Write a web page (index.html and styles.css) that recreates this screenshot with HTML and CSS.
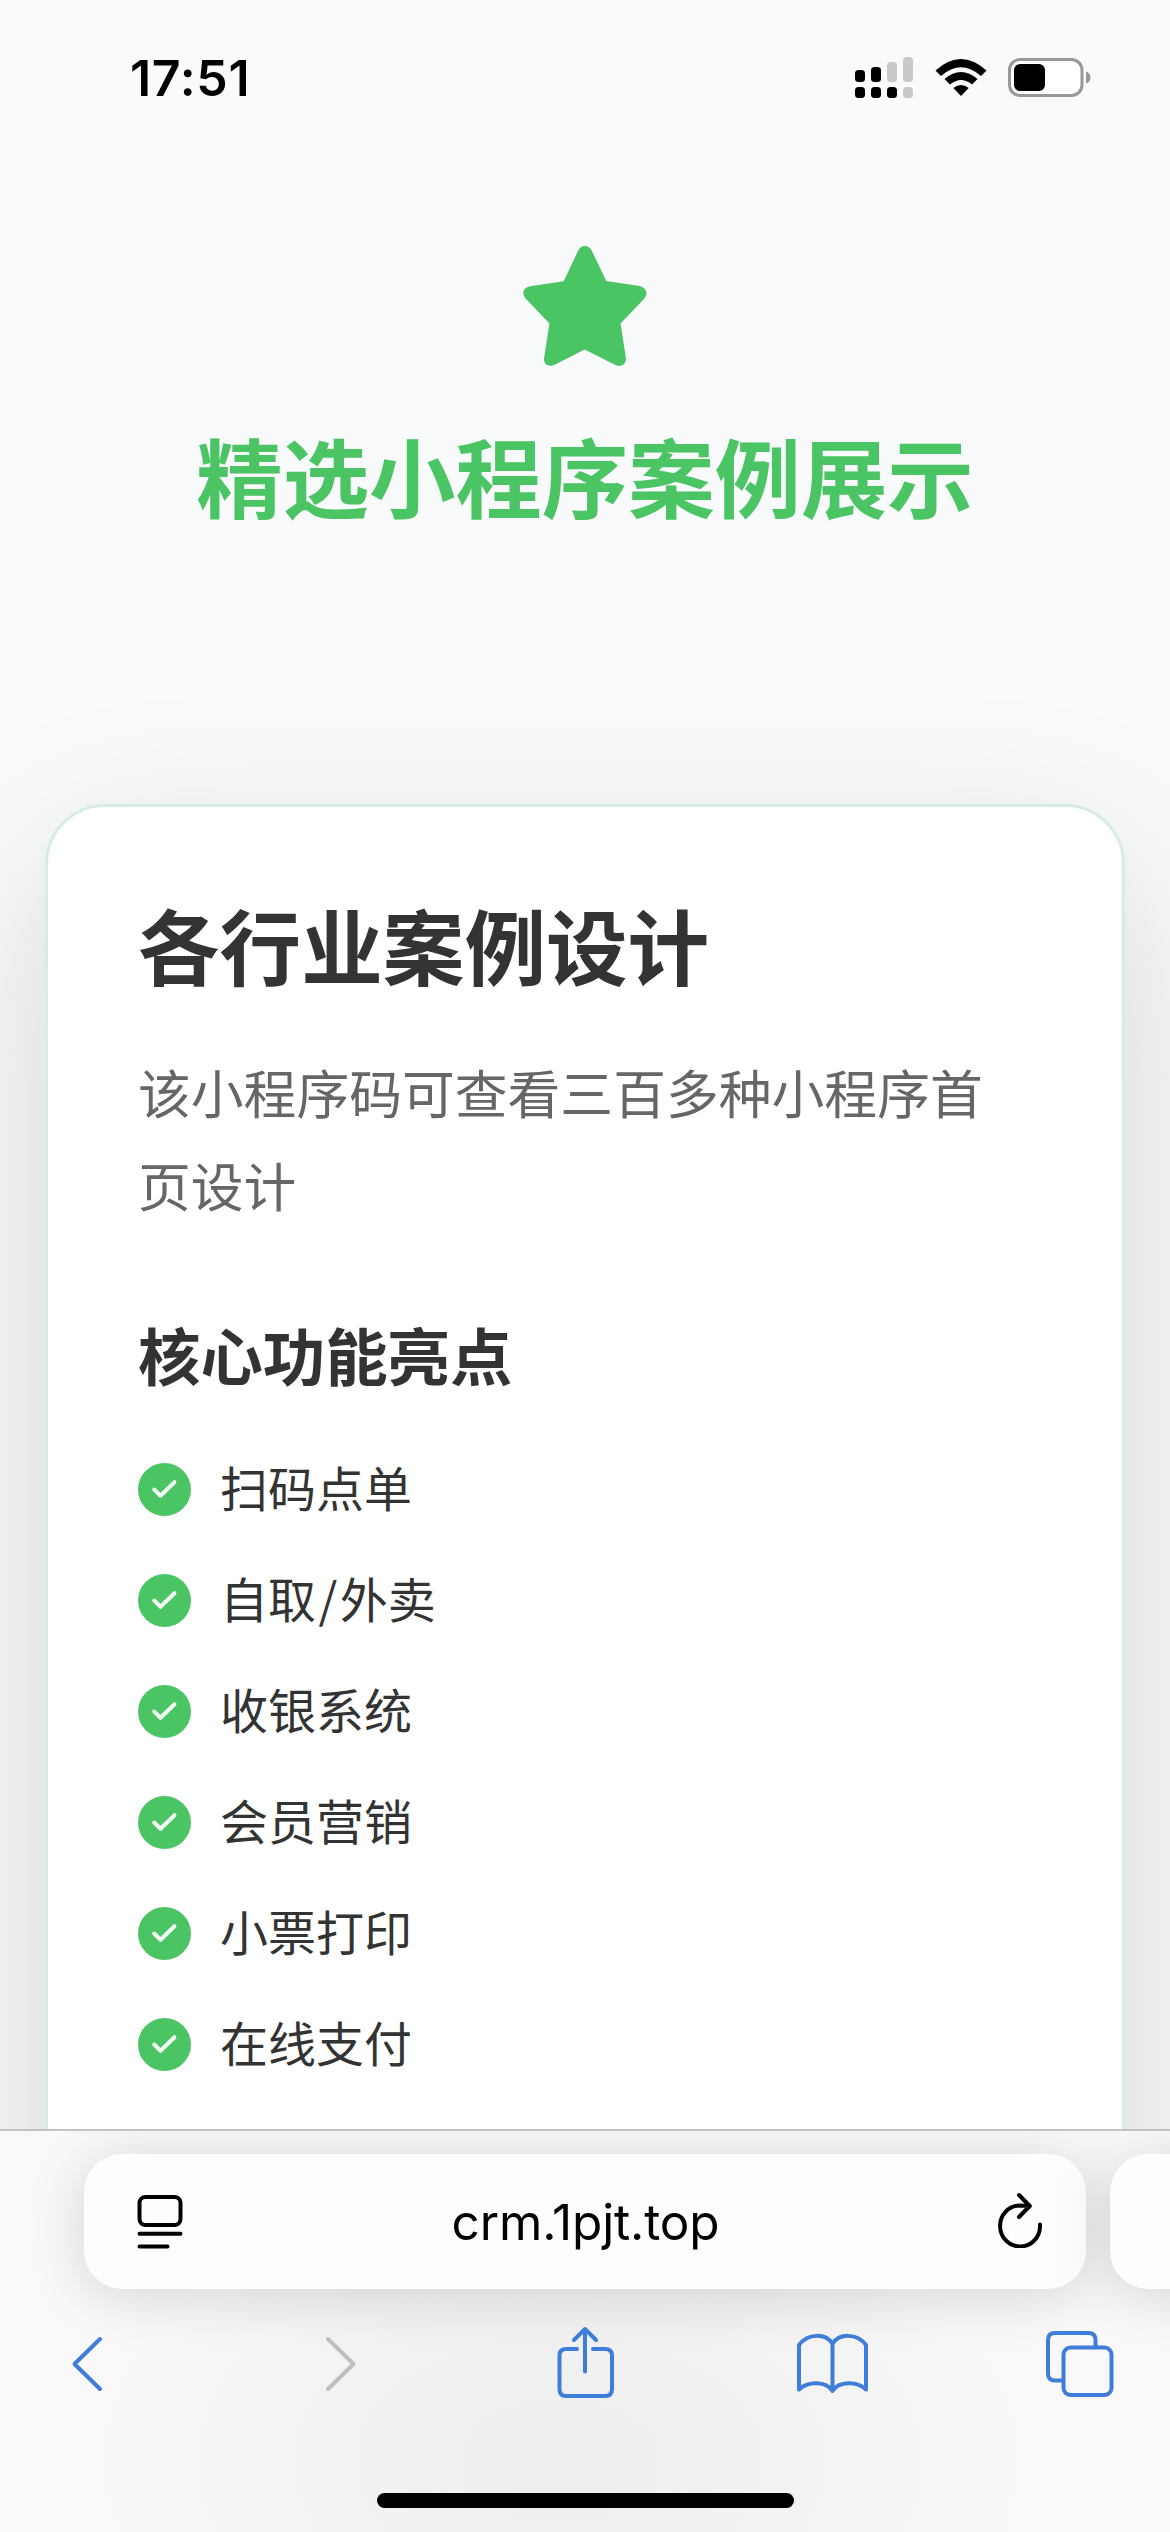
FILE: index.html
```html
<!DOCTYPE html>
<html lang="zh-CN">
<head>
<meta charset="utf-8">
<title>精选小程序案例展示</title>
<link rel="stylesheet" href="styles.css">
</head>
<body>
<div class="viewport">
  <div class="statusbar">
    <span class="clock">17:51</span>
    <div class="indicators">
      <svg class="signal" width="60" height="44" viewBox="855 56 60 44">
        <g fill="#000"><rect x="856" y="70" width="10" height="12" rx="3.5"/><rect x="872" y="67" width="10" height="15" rx="3.5"/><rect x="856" y="87" width="10" height="11" rx="3.5"/><rect x="872" y="87" width="10" height="11" rx="3.5"/><rect x="888" y="87" width="10" height="11" rx="3.5"/></g>
        <g fill="#c8c9ca"><rect x="888" y="62" width="10" height="20" rx="3.5"/><rect x="904" y="57" width="10" height="25" rx="3.5"/><rect x="904" y="87" width="10" height="11" rx="3.5"/></g>
      </svg>
      <svg class="wifi" width="52" height="38" viewBox="0 0 52 38">
        <path d="M0.5 11.5Q26-11.5 51.5 11.5L46 17Q26-.5 6 17ZM9.5 20Q26 6 42.5 20L37 25.5Q26 16.5 15 25.5ZM18.3 29Q26 23 33.7 29L26 37Z"/>
      </svg>
      <svg class="battery" width="84" height="40" viewBox="0 0 84 40">
        <rect x="1.5" y="1.5" width="72.5" height="36" rx="10.5" fill="#fff" stroke="#97989a" stroke-width="3"/>
        <rect x="6" y="6" width="31" height="27" rx="6"/>
        <path d="M78 13.500Q82.500 15 82.500 19.500T78 25.500Z" fill="#97989a"/>
      </svg>
    </div>
  </div>

  <header class="hero">
    <svg class="star" viewBox="68 77 372 361"><path d="M233 92Q240 77 254 77Q267 77 275 92L318 182L418 197Q434 200 438 214Q441 226 432 236L361 310L377 415Q378 430 366 436Q356 440 344 434L253 388L163 434Q150 440 140 435Q129 429 131 414L147 310L76 236Q65 224 70 211Q75 200 90 198L190 183Z"/></svg>
    <h1>精选小程序案例展示</h1>
  </header>

  <main class="card">
    <h2>各行业案例设计</h2>
    <p class="desc">该小程序码可查看三百多种小程序首页设计</p>
    <h3>核心功能亮点</h3>
    <ul class="features">
      <li><svg class="tick" viewBox="0 0 160 160"><circle cx="80" cy="80" r="80"/><path d="M49 80L68 99L110 58"/></svg><span>扫码点单</span></li>
      <li><svg class="tick" viewBox="0 0 160 160"><circle cx="80" cy="80" r="80"/><path d="M49 80L68 99L110 58"/></svg><span>自取<span class="slash">/</span>外卖</span></li>
      <li><svg class="tick" viewBox="0 0 160 160"><circle cx="80" cy="80" r="80"/><path d="M49 80L68 99L110 58"/></svg><span>收银系统</span></li>
      <li><svg class="tick" viewBox="0 0 160 160"><circle cx="80" cy="80" r="80"/><path d="M49 80L68 99L110 58"/></svg><span>会员营销</span></li>
      <li><svg class="tick" viewBox="0 0 160 160"><circle cx="80" cy="80" r="80"/><path d="M49 80L68 99L110 58"/></svg><span>小票打印</span></li>
      <li><svg class="tick" viewBox="0 0 160 160"><circle cx="80" cy="80" r="80"/><path d="M49 80L68 99L110 58"/></svg><span>在线支付</span></li>
    </ul>
  </main>
</div>

<footer class="browser">
  <div class="tabs">
    <div class="address">
      <svg width="46" height="54" viewBox="0 0 46 54" fill="none" stroke="#000" stroke-width="4" stroke-linecap="round"><rect x="2.500" y="2" width="41" height="28" rx="6"/><path d="M2.500 38.700H43.500M2.500 51.500H30.500"/></svg>
      <span class="url">crm.1pjt.top</span>
      <svg class="reload" width="46" height="56" viewBox="997 2191 46 56" fill="none" stroke="#000" stroke-width="4" stroke-linecap="round" stroke-linejoin="round"><path d="M1040 2223.500A20 20.500 0 1 1 1020 2204.500L1029.500 2205M1019 2194L1029.800 2205L1019 2216"/></svg>
    </div>
    <div class="address next"></div>
  </div>
  <nav class="tools">
    <svg width="32" height="74" viewBox="71 2326 32 74"><path d="M100 2339L74.500 2364L100 2389"/></svg>
    <svg class="off" width="32" height="74" viewBox="325 2326 32 74"><path d="M328 2339L353.500 2364L328 2389"/></svg>
    <svg width="60" height="74" viewBox="555 2326 60 74"><path d="M577 2349H566Q559.500 2349 559.500 2355.500V2389Q559.500 2396 566 2396H605Q612 2396 612 2389V2355.500Q612 2349 605 2349H593M585 2330V2371.500M574 2340L585 2329L596 2340"/></svg>
    <svg width="74" height="74" viewBox="796 2326 74 74"><path d="M799 2389.500V2345C808 2333 826 2333 832.500 2344C839 2333 857 2333 866 2345V2389.500C857 2381 839 2381 832.500 2391C826 2381 808 2381 799 2389.500ZM832.500 2344V2391"/></svg>
    <svg width="70" height="74" viewBox="1045 2326 70 74"><rect x="1063.500" y="2347.500" width="48" height="47.500" rx="7"/><path d="M1063 2380.500H1055Q1048 2380.500 1048 2373.500V2340Q1048 2333 1055 2333H1088.500Q1095.500 2333 1095.500 2340V2347"/></svg>
  </nav>
  <div class="home"></div>
</footer>
</body>
</html>
```
FILE: styles.css
```css
* { box-sizing: border-box; margin: 0; padding: 0; }

body {
  width: 1170px;
  height: 2532px;
  overflow: hidden;
  display: flex;
  flex-direction: column;
  background: #f8fafc;
  font-family: "Noto Sans CJK SC", sans-serif;
  color: #333;
}

svg { display: block; flex: none; }

.viewport { height: 2129px; overflow: hidden; }

.statusbar {
  height: 156px;
  padding: 0 78px 0 130px;
  display: flex;
  justify-content: space-between;
}
.clock {
  margin-top: 47px;
  font: 600 50px/62px Inter, sans-serif;
  letter-spacing: 0.7px;
  color: #000;
}
.indicators { display: flex; padding-top: 56px; }
.wifi { margin: 3px 0 0 21px; }
.battery { margin: 2px 0 0 21px; }

.hero {
  height: 648px;
  padding-top: 90px;
  display: flex;
  flex-direction: column;
  align-items: center;
}
.star { width: 124px; height: 120px; fill: #4bc464; }
.hero h1 {
  margin-top: 44px;
  font-size: 86.4px;
  line-height: 130px;
  font-weight: 700;
  color: #4bc464;
}

.card {
  margin: 0 45px;
  height: 1700px;
  padding: 84px 90px 0;
  border: 3px solid #d6eee0;
  border-radius: 60px;
  background: #fff;
  box-shadow: 0 60px 180px rgba(0, 0, 0, 0.15);
}
.card h2 { font-size: 81.6px; line-height: 106px; font-weight: 700; }
.desc {
  margin-top: 48px;
  font-size: 52.8px;
  line-height: 93px;
  color: #666;
}
.card h3 {
  margin-top: 78px;
  font-size: 62.4px;
  line-height: 90px;
  font-weight: 700;
}
.features { margin-top: 51px; list-style: none; display: grid; gap: 39px; }
.features li {
  height: 72px;
  display: flex;
  align-items: center;
  gap: 29px;
  font-size: 48px;
  line-height: 72px;
}
.slash { margin: 0 2.5px; }
.tick { width: 53px; height: 53px; margin-top: 6px; }
.tick circle { fill: #4bc464; }
.tick path {
  fill: none;
  stroke: #f2fff4;
  stroke-width: 12;
  stroke-linecap: round;
  stroke-linejoin: round;
}

.browser {
  flex: 1;
  overflow: hidden;
  border-top: 2px solid #bfc2c6;
  background: radial-gradient(ellipse 480px 300px at 560px 330px, #eeeeee 0%, #f1f1f1 40%, rgba(249, 249, 249, 0) 100%), #f9f9fa;
}
.tabs { display: flex; gap: 24px; padding: 23px 0 0 84px; }
.address {
  flex: none;
  width: 1002px;
  height: 135px;
  padding: 0 43px 0 53px;
  display: flex;
  align-items: center;
  justify-content: space-between;
  border-radius: 38px;
  background: #fdfdfe;
  box-shadow: 0 6px 60px rgba(0, 0, 0, 0.15);
}
.next { width: 200px; }
.url {
  margin-right: 9px;
  font: 400 49.500px/62px Inter, sans-serif;
  letter-spacing: -0.15px;
  color: #000;
}
.reload { margin-top: -4px; }
.tools {
  height: 74px;
  margin-top: 37px;
  padding-left: 71px;
  display: grid;
  grid-template-columns: 254px 230px 241px 249px 70px;
}
.tools svg {
  fill: none;
  stroke: #3f7ddb;
  stroke-width: 4;
  stroke-linecap: round;
  stroke-linejoin: round;
}
.tools .off { stroke: #bfbfbf; }
.home {
  width: 417px;
  height: 15px;
  margin: 93px auto 0;
  border-radius: 8px;
  background: #000;
}
```
